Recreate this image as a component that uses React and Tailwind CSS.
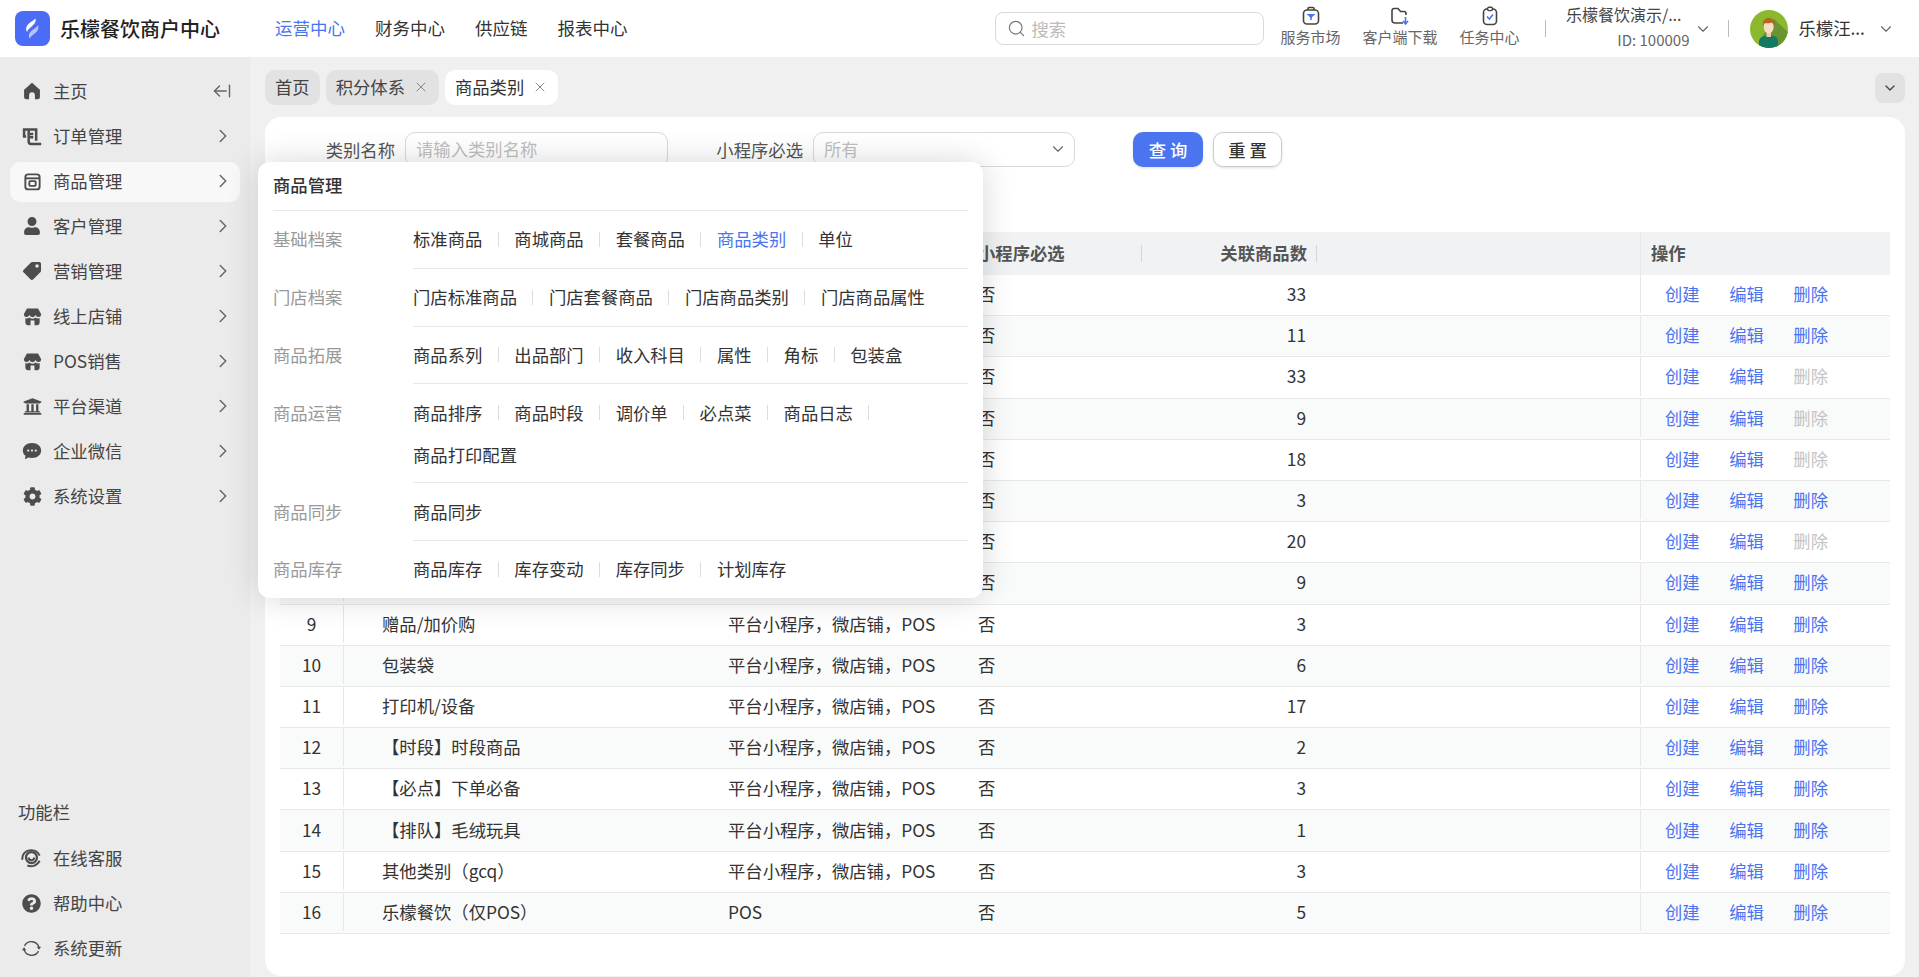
import React from "react";
import {
  ArrowLeftFromLine,
  ChevronDown,
  ChevronRight,
  Search,
  X,
} from "lucide-react";
import { FaCog, FaQuestionCircle, FaTag, FaUniversity, FaUser } from "react-icons/fa";

const HomeIcon = () => (
  <svg viewBox="0 0 24 24" className="w-[20px] h-[20px]" fill="currentColor">
    <path d="M12 2 L21.5 10.5 V19 a3 3 0 0 1-3 3 H15.5 V17 a3.5 3.5 0 0 0-7 0 V22 H5.5 a3 3 0 0 1-3-3 V10.5 Z" />
  </svg>
);

const OrderIcon = () => (
  <svg viewBox="0 0 24 24" className="w-[21px] h-[21px]" fill="none" stroke="currentColor" strokeWidth="3">
    <path d="M5 12 H2.5 V3.5 H17 V17" />
    <path d="M9 9 H13.5 M9 13 H13.5" />
    <path d="M8 4 V18 a3 3 0 0 0 3 3 H23" />
  </svg>
);

const GoodsIcon = () => (
  <svg viewBox="0 0 24 24" className="w-[19px] h-[19px]" fill="none" stroke="currentColor" strokeWidth="2.4">
    <rect x="3" y="3" width="18" height="19" rx="3.5" />
    <path d="M3 8 H21" />
    <rect x="8" y="11.5" width="8" height="6" rx="1" />
  </svg>
);

const StoreIcon = () => (
  <svg viewBox="0 0 24 24" className="w-[19px] h-[19px]" fill="currentColor">
    <path d="M5 2 H19 L23 9 a3.6 3.6 0 0 1-7 1.2 a4.3 4.3 0 0 1-8 0 A3.6 3.6 0 0 1 1 9 Z" />
    <path d="M3 14 a5 5 0 0 0 5-.8 a6 6 0 0 0 8 0 a5 5 0 0 0 5 .8 V20 a3 3 0 0 1-3 3 H6 a3 3 0 0 1-3-3 Z M9.5 17 V23 H14.5 V17 Z" fillRule="evenodd" />
  </svg>
);

const ChatIcon = () => (
  <svg viewBox="0 0 24 24" className="w-[20px] h-[20px]" fill="currentColor">
    <path d="M12 2.5 C18.6 2.5 23 6.6 23 11.5 S18.6 20.5 12 20.5 C10.6 20.5 9 20.3 7.8 19.9 L3.5 22 L4.2 17.8 C2 16.2 1 13.9 1 11.5 C1 6.6 5.4 2.5 12 2.5 Z" />
    <circle cx="7.5" cy="11.5" r="1.3" fill="#ebebeb" />
    <circle cx="12" cy="11.5" r="1.3" fill="#ebebeb" />
    <circle cx="16.5" cy="11.5" r="1.3" fill="#ebebeb" />
  </svg>
);

const ServiceIcon = () => (
  <svg viewBox="0 0 24 24" className="w-[22px] h-[22px]" fill="none" stroke="currentColor" strokeWidth="2">
    <circle cx="12.5" cy="11.5" r="6" strokeWidth="2.4" />
    <path d="M9.5 11.5 a3 3 0 0 0 6 0" strokeWidth="2.4" />
    <path d="M2.5 14 C2 8 6 3.5 12.5 3.5 C17 3.5 20 6 21.5 9.5" />
    <path d="M8 20 C12 22 18 21 21.5 15" />
  </svg>
);

const UpdateIcon = () => (
  <svg viewBox="0 0 24 24" className="w-[21px] h-[21px]" fill="none" stroke="currentColor" strokeWidth="1.5">
    <path d="M4 9 A9 9 0 0 1 20.5 10.5" />
    <path d="M20 15 A9 9 0 0 1 3.5 13.5" />
    <path d="M18 10 H23 L20.5 13.5 Z M1 14 H6 L3.5 10.5 Z" fill="currentColor" stroke="none" />
  </svg>
);

const Logo = () => (
  <svg viewBox="0 0 35 35" className="w-[35px] h-[35px] shrink-0">
    <rect width="35" height="35" rx="8" fill="#4a6cf7" />
    <path d="M20.5 7.5 C21.5 11 19 13.5 15.5 16.5 C13.5 18.2 12.5 19.5 12 21 C10.2 17.5 11.5 14.5 14.5 12 C16.8 10.2 19 9 20.5 7.5 Z" fill="#ffffff" />
    <path d="M23 14 C24.5 18 22 21 18.5 23.5 C16.5 25 15.5 26 14.5 27.5 C13 24 14.5 21.2 17.5 19 C19.8 17.5 21.8 16 23 14 Z" fill="#ffffff" fillOpacity="0.6" />
  </svg>
);

const MarketIcon = () => (
  <svg viewBox="0 0 20 20" className="w-[20px] h-[20px]" fill="none">
    <path d="M7 4 V2.5 a1 1 0 0 1 1-1 h4 a1 1 0 0 1 1 1 V4" stroke="#444" strokeWidth="1.6" />
    <rect x="2.5" y="4" width="15" height="14" rx="3.5" stroke="#444" strokeWidth="1.6" />
    <path d="M5.5 8 H14.5 L10 12 Z" fill="#4a74f0" />
    <path d="M10 11 V14" stroke="#4a74f0" strokeWidth="1.6" />
  </svg>
);

const DownloadIcon = () => (
  <svg viewBox="0 0 20 20" className="w-[20px] h-[20px]" fill="none">
    <path d="M13 17 H5 a3 3 0 0 1-3-3 V4.5 a2 2 0 0 1 2-2 H8 L10.5 5.5 H14 a2 2 0 0 1 2 2 V9" stroke="#444" strokeWidth="1.6" />
    <path d="M15.5 11 V17 M13 15 L15.5 18 L18 15" stroke="#4a74f0" strokeWidth="1.6" />
  </svg>
);

const TaskIcon = () => (
  <svg viewBox="0 0 20 20" className="w-[20px] h-[20px]" fill="none">
    <rect x="3.5" y="3" width="13" height="15.5" rx="3.5" stroke="#444" strokeWidth="1.6" />
    <rect x="7.5" y="1.2" width="5" height="3.4" rx="1.5" fill="#fff" stroke="#444" strokeWidth="1.4" />
    <path d="M7 10.5 L9.3 13 L13 8.5" stroke="#4a74f0" strokeWidth="1.6" />
  </svg>
);

const Avatar = () => (
  <svg viewBox="0 0 38 38" className="w-[38px] h-[38px] shrink-0">
    <defs>
      <clipPath id="avatar-clip">
        <circle cx="19" cy="19" r="19" />
      </clipPath>
    </defs>
    <g clipPath="url(#avatar-clip)">
      <rect width="38" height="38" fill="#8bb82d" />
      <path d="M24 9 L42 26 V42 H14 L10 30 Z" fill="#6b9233" />
      <path d="M9 32 C9 27 13 25.5 19 25.5 C25 25.5 28 27 28 32 V38 H9 Z" fill="#127a63" />
      <rect x="16.5" y="21" width="4.5" height="6" fill="#f0caa8" />
      <ellipse cx="18.7" cy="17" rx="5" ry="6.5" fill="#f8dcc4" />
      <path d="M13 17 C12 10 15.5 8 19 8 C23 8 25.5 11 24.3 17 C23.8 14 23 13 21.5 12.5 C19 13.5 15.5 13.5 14.5 13 C13.8 14 13.3 15 13 17 Z" fill="#b5651d" />
    </g>
  </svg>
);

const menus = [
  { name: "主页", icon: <HomeIcon /> },
  { name: "订单管理", icon: <OrderIcon /> },
  { name: "商品管理", icon: <GoodsIcon />, active: true },
  { name: "客户管理", icon: <FaUser className="w-[18px] h-[18px]" /> },
  { name: "营销管理", icon: <FaTag className="w-[18px] h-[18px] -scale-x-100" /> },
  { name: "线上店铺", icon: <StoreIcon /> },
  { name: "POS销售", icon: <StoreIcon /> },
  { name: "平台渠道", icon: <FaUniversity className="w-[19px] h-[19px]" /> },
  { name: "企业微信", icon: <ChatIcon /> },
  { name: "系统设置", icon: <FaCog className="w-[19px] h-[19px]" /> },
];

const tools = [
  { name: "在线客服", icon: <ServiceIcon /> },
  { name: "帮助中心", icon: <FaQuestionCircle className="w-[19px] h-[19px]" /> },
  { name: "系统更新", icon: <UpdateIcon /> },
];

const groups = [
  { label: "基础档案", lines: [["标准商品", "商城商品", "套餐商品", "商品类别", "单位"]] },
  { label: "门店档案", lines: [["门店标准商品", "门店套餐商品", "门店商品类别", "门店商品属性"]] },
  { label: "商品拓展", lines: [["商品系列", "出品部门", "收入科目", "属性", "角标", "包装盒"]] },
  { label: "商品运营", lines: [["商品排序", "商品时段", "调价单", "必点菜", "商品日志", ""], ["商品打印配置"]] },
  { label: "商品同步", lines: [["商品同步"]] },
  { label: "商品库存", lines: [["商品库存", "库存变动", "库存同步", "计划库存"]] },
];

// rows 1-8 sit under the open menu, only the right part shows
const rows = [
  { count: 33 },
  { count: 11 },
  { count: 33, locked: true },
  { count: 9, locked: true },
  { count: 18, locked: true },
  { count: 3 },
  { count: 20, locked: true },
  { count: 9 },
  { name: "赠品/加价购", type: "平台小程序，微店铺，POS", count: 3 },
  { name: "包装袋", type: "平台小程序，微店铺，POS", count: 6 },
  { name: "打印机/设备", type: "平台小程序，微店铺，POS", count: 17 },
  { name: "【时段】时段商品", type: "平台小程序，微店铺，POS", count: 2 },
  { name: "【必点】下单必备", type: "平台小程序，微店铺，POS", count: 3 },
  { name: "【排队】毛绒玩具", type: "平台小程序，微店铺，POS", count: 1 },
  { name: "其他类别（gcq）", type: "平台小程序，微店铺，POS", count: 3 },
  { name: "乐檬餐饮（仅POS）", type: "POS", count: 5 },
];

const Header = () => (
  <header className="h-[57px] bg-white flex items-center pl-[15px] shrink-0">
    <Logo />
    <div className="ml-[10px] w-[160px] text-[20px] font-medium text-[#222] whitespace-nowrap">
      乐檬餐饮商户中心
    </div>
    <nav className="ml-[55px] flex gap-[30px] text-[17.5px] text-[#333]">
      <span className="text-[#4a74f0]">运营中心</span>
      <span>财务中心</span>
      <span>供应链</span>
      <span>报表中心</span>
    </nav>
    <div className="ml-[367px] w-[269px] h-[33px] border border-[#d9d9d9] rounded-[8px] flex items-center pl-[11px] gap-[6px] text-[17.33px] text-[#bbb]">
      <Search className="w-[19px] h-[19px] text-[#777]" strokeWidth={1.5} />
      搜索
    </div>
    <div className="ml-[17px] mb-[4px] flex gap-[22px] text-[15px] text-[#666]">
      <div className="flex flex-col items-center w-[60px] leading-[22px]">
        <MarketIcon />
        服务市场
      </div>
      <div className="flex flex-col items-center w-[75px] leading-[22px]">
        <DownloadIcon />
        客户端下载
      </div>
      <div className="flex flex-col items-center w-[60px] leading-[22px]">
        <TaskIcon />
        任务中心
      </div>
    </div>
    <div className="ml-[25px] w-px h-[17px] bg-[#bbb]" />
    <div className="ml-[19px] w-[125px] pb-[3px] flex flex-col items-end text-[15px] leading-[25px] text-[#444]">
      <span className="pr-[8px] text-[16px] whitespace-nowrap">乐檬餐饮演示/...</span>
      <span className="text-[#666]">ID: 100009</span>
    </div>
    <ChevronDown className="ml-[4px] w-[18px] h-[18px] text-[#666]" strokeWidth={1.5} />
    <div className="ml-[16px] w-px h-[17px] bg-[#bbb]" />
    <div className="ml-[21px]">
      <Avatar />
    </div>
    <span className="ml-[11px] pb-[2px] text-[17.33px] text-[#333] whitespace-nowrap">乐檬汪...</span>
    <ChevronDown className="ml-[12px] w-[18px] h-[18px] text-[#666]" strokeWidth={1.5} />
  </header>
);

const SideItem = ({ item, index }) => (
  <div
    className={`h-[40px] rounded-[10px] flex items-center pl-[12px] pr-[6px] pb-[2px] text-[17.33px] text-[#444] ${
      item.active ? "bg-[#f8f8f8]" : ""
    }`}
  >
    <span className="w-[20px] flex justify-center text-[#4d4d4d] shrink-0">{item.icon}</span>
    <span className="ml-[11px]">{item.name}</span>
    {index === 0 && (
      <ArrowLeftFromLine className="ml-auto mr-[2px] w-[20px] h-[20px] text-[#666]" strokeWidth={1.7} />
    )}
    {index > 0 && (
      <ChevronRight className="ml-auto w-[22px] h-[22px] text-[#666]" strokeWidth={1.6} />
    )}
  </div>
);

const Sidebar = () => (
  <aside className="w-[250px] shrink-0 bg-[#ebebeb] px-[10px] pt-[15px] pb-[8px] flex flex-col justify-between">
    <div className="flex flex-col gap-[5px]">
      {menus.map((item, i) => (
        <SideItem key={item.name} item={item} index={i} />
      ))}
    </div>
    <div>
      <div className="pl-[8px] h-[24px] mb-[14px] text-[17.33px] leading-[22px] text-[#444]">功能栏</div>
      <div className="flex flex-col gap-[5px]">
        {tools.map((item) => (
          <div key={item.name} className="h-[40px] pb-[2px] flex items-center pl-[9px] text-[17.33px] text-[#444]">
            <span className="w-[24px] flex justify-center text-[#4d4d4d] shrink-0">{item.icon}</span>
            <span className="ml-[10px]">{item.name}</span>
          </div>
        ))}
      </div>
    </div>
  </aside>
);

const Tabs = () => (
  <div className="flex items-center h-[35px] mt-[13px] mr-[14px] gap-[6px] text-[17.33px] text-[#444]">
    <div className="h-full px-[10px] pb-[2px] rounded-[10px] bg-[#e2e2e2] flex items-center">首页</div>
    <div className="h-full pl-[10px] pr-[10px] pb-[2px] rounded-[10px] bg-[#e2e2e2] flex items-center gap-[8px]">
      积分体系
      <X className="w-[16px] h-[16px] text-[#888]" strokeWidth={1.5} />
    </div>
    <div className="h-full pl-[10px] pr-[10px] pb-[2px] rounded-[10px] bg-white flex items-center gap-[8px] text-[#333]">
      商品类别
      <X className="w-[16px] h-[16px] text-[#888]" strokeWidth={1.5} />
    </div>
    <div className="ml-auto w-[30px] h-[30px] rounded-[8px] bg-[#e2e2e2] flex items-center justify-center">
      <ChevronDown className="w-[16px] h-[16px] text-[#444]" strokeWidth={2} />
    </div>
  </div>
);

const Filters = () => (
  <div className="flex items-center h-[35px] text-[17.33px] text-[#555]">
    <span className="w-[115px] text-right whitespace-nowrap">类别名称</span>
    <div className="ml-[10px] w-[263px] h-full border border-[#d9d9d9] rounded-[10px] flex items-center pl-[10px] pb-[1px] text-[#bfbfbf]">
      请输入类别名称
    </div>
    <span className="ml-[47px] w-[88px] text-right whitespace-nowrap">小程序必选</span>
    <div className="ml-[10px] w-[262px] h-full border border-[#d9d9d9] rounded-[10px] flex items-center justify-between pl-[10px] pr-[7px] pb-[1px] text-[#bfbfbf]">
      所有
      <ChevronDown className="w-[18px] h-[18px] text-[#666]" strokeWidth={1.5} />
    </div>
    <button className="ml-[58px] w-[70px] h-full rounded-[10px] bg-[#4a74f0] text-white font-medium shadow-sm">
      查 询
    </button>
    <button className="ml-[10px] w-[69px] h-full rounded-[10px] border border-[#ccc] text-[#333] font-medium shadow-sm">
      重 置
    </button>
  </div>
);

const columns = "grid grid-cols-[63px_375px_250px_174px_175px_323px_250px]";

const Table = () => (
  <div className="mt-[65px] text-[17.33px] text-[#333]">
    <div className={`${columns} h-[43px] items-center bg-[#f1f2f4] font-semibold text-[#555]`}>
      <div />
      <div />
      <div />
      <div className="pl-[10px] pb-[2px] h-full flex items-center relative whitespace-nowrap">
        小程序必选
        <span className="absolute right-0 top-[13px] w-px h-[17px] bg-[#d5d5d5]" />
      </div>
      <div className="pr-[10px] pb-[2px] h-full flex items-center justify-end relative whitespace-nowrap">
        关联商品数
        <span className="absolute right-0 top-[13px] w-px h-[17px] bg-[#d5d5d5]" />
      </div>
      <div />
      <div className="pl-[10px] pb-[2px] h-full flex items-center border-l border-[#e8e8e8]">操作</div>
    </div>
    {rows.map((row, i) => (
      <div
        key={i}
        className={`${columns} h-[41.2px] pb-[2px] items-center border-b border-[#e8e8e8] ${
          i % 2 === 1 ? "bg-[#f9fafa]" : "bg-white"
        }`}
      >
        <div className="text-center">{row.name ? i + 1 : ""}</div>
        <div className="h-full flex items-center pl-[38px] border-l border-[#e8e8e8]">{row.name}</div>
        <div className="pl-[10px]">{row.type}</div>
        <div className="pl-[10px]">否</div>
        <div className="pr-[11px] text-right">{row.count}</div>
        <div />
        <div className="h-full flex items-center pl-[24px] gap-[29.5px] border-l border-[#e8e8e8] text-[#4a74f0]">
          <span>创建</span>
          <span>编辑</span>
          <span className={row.locked ? "text-[#c4c4c4]" : ""}>删除</span>
        </div>
      </div>
    ))}
  </div>
);

const ProductMenu = () => (
  <div className="absolute left-[258px] top-[162px] w-[725px] rounded-[12px] bg-white px-[15px] shadow-[0_0_32px_rgba(0,0,0,0.16)] text-[17.33px] z-10">
    <div className="h-[49px] pb-[2px] flex items-center font-medium text-[#333] border-b border-[#e8e8e8]">商品管理</div>
    {groups.map((group, g) => (
      <div key={group.label} className="flex">
        <div className="w-[140px] h-[44px] mt-[6.4px] flex items-center text-[#999]">{group.label}</div>
        <div className={`flex-1 py-[6.4px] ${g < groups.length - 1 ? "border-b border-[#e8e8e8]" : ""}`}>
          {group.lines.map((line, l) => (
            <div key={l} className={`flex items-center text-[#333] ${l > 0 ? "h-[41px]" : "h-[44px]"}`}>
              {line.map((text, t) => (
                <React.Fragment key={t}>
                  {t > 0 && <span className="w-px h-[15px] bg-[#ddd] mx-[15.5px]" />}
                  <span className={text === "商品类别" ? "text-[#4a74f0]" : ""}>{text}</span>
                </React.Fragment>
              ))}
            </div>
          ))}
        </div>
      </div>
    ))}
  </div>
);

export default function App() {
  return (
    <div
      className="relative h-[977px] flex flex-col overflow-hidden bg-[#f0f0f0] [text-spacing-trim:space-all]"
      style={{ fontFamily: '"Noto Sans CJK SC", "Noto Sans", sans-serif' }}
    >
      <Header />
      <div className="flex flex-1 min-h-0">
        <Sidebar />
        <main className="flex-1 min-w-0 pl-[15px] flex flex-col">
          <Tabs />
          <section className="mt-[12px] mr-[14px] mb-[1px] flex-1 bg-white rounded-[16px] px-[15px] pt-[15px]">
            <Filters />
            <Table />
          </section>
        </main>
      </div>
      <ProductMenu />
    </div>
  );
}
